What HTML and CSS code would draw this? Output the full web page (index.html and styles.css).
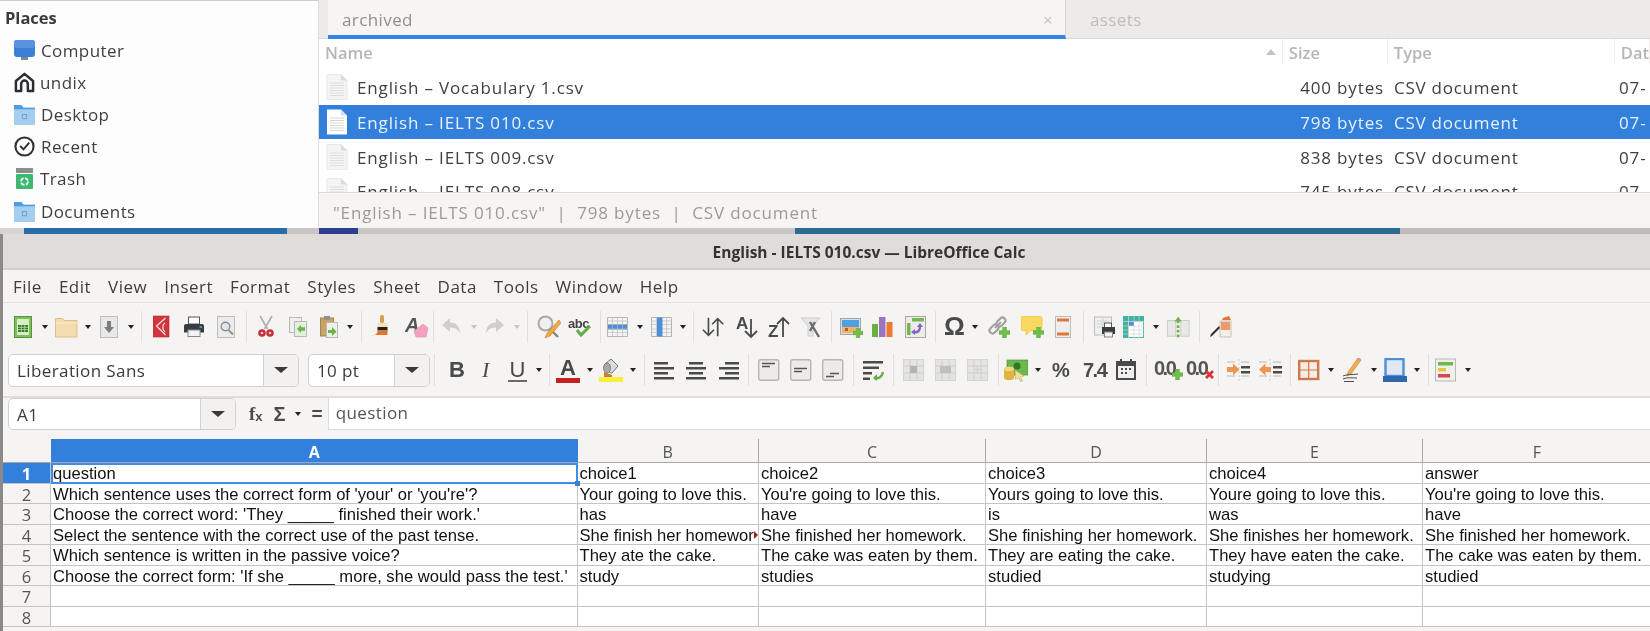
FILE: index.html
```html
<!DOCTYPE html>
<html lang="en">
<head>
    <meta charset="UTF-8">
    <title>English - IELTS 010.csv — LibreOffice Calc</title>
    <link rel="stylesheet" href="styles.css">
</head>
<body>
<svg class="defs" width="0" height="0">
    <symbol id="plus" viewBox="0 0 10 10"><path d="M3.3 0h3.4v3.3H10v3.4H6.7V10H3.3V6.7H0V3.3h3.3z" fill="#6fbf4a" stroke="#5aa838" stroke-width=".5"/></symbol>
    <symbol id="page" viewBox="0 0 22 26"><path d="M1 .5h14l6 6v19H1z" fill="#f4f4f4" stroke="#e9e9e9"/><path d="M15 .5v6h6z" fill="#dcdcdc"/><path d="M4 9h14M4 11.5h14M4 14h14M4 16.5h14M4 19h14M4 21.5h14" stroke="#dedede"/></symbol>
    <symbol id="folder" viewBox="0 0 20 20"><path d="M0 1.5h7l2 2h11V20H0z" fill="#a5cdf0"/><path d="M0 1h7l2 2.5h11V5H0z" fill="#4d9de0"/><rect x="8" y="10" width="4" height="4" fill="none" stroke="#6ba6d8"/></symbol>
</svg>

<div class="desktop">
    <section class="files">
        <aside class="places">
            <h3>Places</h3>
            <div class="place">
                <svg class="pl-icon" viewBox="0 0 21 21"><rect x="0" y="0" width="21" height="17" rx="3" fill="#3b7fd6"/><rect x="0" y="0" width="21" height="8" rx="3" fill="#5794e0"/><rect x="7" y="17" width="7" height="3" fill="#7b8896"/></svg>
                <span>Computer</span>
            </div>
            <div class="place place-tight">
                <svg class="pl-icon" viewBox="0 0 21 22"><path d="M10.5 2 19.5 9.5V20H14V12.5a3.5 3.5 0 0 0-7 0V20H1.5V9.5z" fill="none" stroke="#2b2e31" stroke-width="2.6" stroke-linejoin="round"/></svg>
                <span>undix</span>
            </div>
            <div class="place">
                <svg class="pl-icon" viewBox="0 0 21 21"><use href="#folder"/></svg>
                <span>Desktop</span>
            </div>
            <div class="place">
                <svg class="pl-icon" viewBox="0 0 22 22"><circle cx="11" cy="11" r="9.5" fill="none" stroke="#2f3234" stroke-width="2.2"/><path d="M6.5 10.5 10 14l6-7" fill="none" stroke="#2f3234" stroke-width="2"/></svg>
                <span>Recent</span>
            </div>
            <div class="place place-tight">
                <svg class="pl-icon" viewBox="0 0 21 21"><rect x="2" y="0" width="17" height="5" fill="#8b8f8c"/><rect x="2" y="6" width="17" height="15" rx="1" fill="#3dba6f"/><circle cx="10.5" cy="13.5" r="3.5" fill="none" stroke="#fff" stroke-width="1.8" stroke-dasharray="4 1.5"/></svg>
                <span>Trash</span>
            </div>
            <div class="place">
                <svg class="pl-icon" viewBox="0 0 21 21"><use href="#folder"/></svg>
                <span>Documents</span>
            </div>
        </aside>
        <div class="browser">
            <div class="tabs">
                <div class="tab tab-active"><span>archived</span><span class="tab-x">×</span></div>
                <div class="tab">assets</div>
            </div>
            <div class="file-head">
                <div class="col-name">Name<span class="sort-up"></span></div>
                <div class="col-size">Size</div>
                <div class="col-type">Type</div>
                <div class="col-date">Dat</div>
            </div>
            <div class="file-list">
                <div class="file-row">
                    <svg class="file-icon"><use href="#page"/></svg>
                    <div class="file-name">English – Vocabulary 1.csv</div>
                    <div class="file-size">400 bytes</div>
                    <div class="file-type">CSV document</div>
                    <div class="file-date">07-</div>
                </div>
                <div class="file-row selected">
                    <svg class="file-icon" viewBox="0 0 22 26"><path d="M1 .5h14l6 6v19H1z" fill="#fff"/><path d="M15 .5v6h6z" fill="#cfdff5"/><path d="M4 9h14M4 11.5h14M4 14h14M4 16.5h14M4 19h14M4 21.5h14" stroke="#d5d5d5"/></svg>
                    <div class="file-name">English – IELTS 010.csv</div>
                    <div class="file-size">798 bytes</div>
                    <div class="file-type">CSV document</div>
                    <div class="file-date">07-</div>
                </div>
                <div class="file-row">
                    <svg class="file-icon"><use href="#page"/></svg>
                    <div class="file-name">English – IELTS 009.csv</div>
                    <div class="file-size">838 bytes</div>
                    <div class="file-type">CSV document</div>
                    <div class="file-date">07-</div>
                </div>
                <div class="file-row">
                    <svg class="file-icon"><use href="#page"/></svg>
                    <div class="file-name">English – IELTS 008.csv</div>
                    <div class="file-size">745 bytes</div>
                    <div class="file-type">CSV document</div>
                    <div class="file-date">07-</div>
                </div>
            </div>
            <div class="status">"English – IELTS 010.csv"&nbsp; | &nbsp;798 bytes&nbsp; | &nbsp;CSV document</div>
        </div>
    </section>

    <div class="strip">
        <div class="strip-a"></div>
        <div class="strip-b"></div>
        <div class="strip-c"></div>
        <div class="strip-d"></div>
        <div class="strip-c strip-e"></div>
        <div class="strip-f"></div>
    </div>

    <section class="calc">
        <div class="titlebar">English - IELTS 010.csv — LibreOffice Calc</div>
        <nav class="menubar">
            <span>File</span><span>Edit</span><span>View</span><span>Insert</span><span>Format</span><span>Styles</span><span>Sheet</span><span>Data</span><span>Tools</span><span>Window</span><span>Help</span>
        </nav>

        <div class="toolbar toolbar-std">
            <svg viewBox="0 0 24 24"><rect x=".5" y="1.5" width="17" height="21" fill="#83bd62" stroke="#4f9a32"/><rect x="3" y="4" width="12" height="16" fill="#d8edc8"/><path d="M4 10h10v7H4z" fill="#2f7d22"/><path d="M4 12.3h10M4 14.6h10M7.3 10v7M10.7 10v7" stroke="#cfe8bd" stroke-width=".7"/></svg>
            <i class="drop"></i>
            <svg viewBox="0 0 24 24"><path d="M.5 5V3.5h7l2 2H22V22H.5z" fill="#f5dcae" stroke="#dcc08c"/><path d="M.5 8H22" stroke="#fbeccd"/></svg>
            <i class="drop"></i>
            <svg viewBox="0 0 24 24"><rect x=".5" y="1.5" width="17" height="21" fill="#e8e8e8" stroke="#bcbcbc"/><path d="M7 6h4v6h3l-5 6-5-6h3z" fill="#7c7c7c"/></svg>
            <i class="drop"></i>
            <i class="sep"></i>
            <svg viewBox="0 0 24 24"><rect x="0" y="1" width="16" height="21" fill="#d3353d" stroke="#b92a31" stroke-width=".6"/><path d="M12.5 3 3.5 11l9 9M12 8c-3 2-3 6 0 9" fill="none" stroke="#fbe3e3" stroke-width="1.2"/></svg>
            <svg viewBox="0 0 24 24"><rect x="4.5" y="2" width="11" height="7" fill="#fff" stroke="#555"/><path d="M2 9h16a2 2 0 0 1 2 2v6.5H0V11a2 2 0 0 1 2-2z" fill="#383d42"/><rect x="15.5" y="11" width="2.5" height="2" fill="#2f9fb3"/><rect x="4" y="15" width="12" height="6.5" fill="#f3f3f3" stroke="#8a8a8a"/></svg>
            <svg viewBox="0 0 24 24"><rect x=".5" y="1.5" width="17" height="21" fill="#ececec" stroke="#bdbdbd"/><circle cx="8.5" cy="11.5" r="4.3" fill="#dfe7ee" stroke="#8c8c8c" stroke-width="1.4"/><path d="m11.5 15 4.5 4.5" stroke="#9a8f83" stroke-width="2"/></svg>
            <i class="sep"></i>
            <svg viewBox="0 0 24 24"><path d="M2 1 9.5 14M14 1 6.5 14" stroke="#b0b0b0" stroke-width="1.7"/><circle cx="4" cy="18" r="3.8" fill="#c62f38"/><circle cx="12" cy="18" r="3.8" fill="#c62f38"/><circle cx="4" cy="18" r="1.3" fill="#f0c9c9"/><circle cx="12" cy="18" r="1.3" fill="#f0c9c9"/></svg>
            <svg viewBox="0 0 24 24"><rect x=".5" y="2.5" width="12" height="15" fill="#f0f0f0" stroke="#b8b8b8"/><rect x="5.5" y="6.5" width="12" height="15" fill="#e4efe0" stroke="#b8b8b8"/><path d="M8 14l4-4v2.3h4v3.4h-4V18z" fill="#69b545"/></svg>
            <svg viewBox="0 0 24 24"><rect x=".5" y="3" width="13" height="18" fill="#c8a468" stroke="#a58447"/><rect x="4" y="1" width="6" height="4" fill="#8f8f8f"/><rect x="6.5" y="7.5" width="11" height="15" fill="#eef3ea" stroke="#b8b8b8"/><path d="M8 15h4v-3l4.5 4.5L12 21v-3H8z" fill="#69b545"/></svg>
            <i class="drop"></i>
            <i class="sep"></i>
            <svg viewBox="0 0 24 24"><rect x="9" y="0" width="4" height="8" rx="1.5" fill="#d9a055"/><rect x="6.5" y="8" width="10" height="4" fill="#efe0c0"/><rect x="6.5" y="12" width="10" height="3.5" fill="#222"/><path d="M6.5 15.5h10V20H2c-1 1-1.5 1-2 1 3-1 6.5-1 6.5-5.5z" fill="#e2762d"/></svg>
            <svg viewBox="0 0 24 24"><text x="0" y="17" class="ic-a">A</text><path d="M9 16 18 9l5 4-2 9H11z" fill="#f3a0c0" stroke="#e889ad" stroke-width=".6"/></svg>
            <i class="sep"></i>
            <svg viewBox="0 0 24 24"><path d="M0 10 8 3v4.5c6 0 10 3.5 10 11-2-4-5-6-10-6V17z" fill="#cfcfcd"/></svg>
            <i class="drop drop-off"></i>
            <svg viewBox="0 0 24 24"><path d="M18 10 10 3v4.5C4 7.5 0 11 0 18.5c2-4 5-6 10-6V17z" fill="#cfcfcd"/></svg>
            <i class="drop drop-off"></i>
            <i class="sep"></i>
            <svg viewBox="0 0 24 24"><circle cx="8.5" cy="8.5" r="7" fill="#eef0f2" stroke="#a8a8a8" stroke-width="2"/><path d="M13 14l8 8" stroke="#8b8276" stroke-width="2.4"/><path d="M22 5 10 18l-2 5 5-2L24 8z" fill="#f0a93e" stroke="#b0772a" stroke-width=".5"/></svg>
            <svg class="wide" viewBox="0 0 26 24"><text x="0" y="13" class="ic-abc">abc</text><path d="M9 15l4 5 9-9" fill="none" stroke="#5cae45" stroke-width="3"/></svg>
            <i class="sep"></i>
            <svg viewBox="0 0 24 24"><path d="M.5 2.5h20v19H.5z" fill="#f4f4f4" stroke="#b5b5b5"/><rect x="1" y="9" width="19" height="5.5" fill="#4d8ed8"/><path d="M5.5 2.5v19M10.5 2.5v19M15.5 2.5v19M.5 6h20M.5 9.5h20M.5 14h20M.5 17.5h20" stroke="#bdbdbd" stroke-width=".7"/></svg>
            <i class="drop"></i>
            <svg viewBox="0 0 24 24"><path d="M.5 2.5h20v19H.5z" fill="#f4f4f4" stroke="#b5b5b5"/><path d="M5.5 2.5v19M10.5 2.5v19M15.5 2.5v19M.5 6h20M.5 9.5h20M.5 14h20M.5 17.5h20" stroke="#bdbdbd" stroke-width=".7"/><rect x="6" y="2.5" width="5.5" height="19" fill="#4d8ed8"/></svg>
            <i class="drop"></i>
            <i class="sep"></i>
            <svg viewBox="0 0 26 24"><path d="M7 2v19M1 15l6 6 6-6M17 22V3M11 9l6-6 6 6" fill="none" stroke="#4a4a4a" stroke-width="1.8"/></svg>
            <svg viewBox="0 0 24 24"><text x="0" y="14" class="ic-sort">A</text><path d="M15 4v18M9 16l6 6 6-6" fill="none" stroke="#4a4a4a" stroke-width="1.8"/></svg>
            <svg viewBox="0 0 24 24"><text x="0" y="22" class="ic-sort">Z</text><path d="M15 22V3M9 9l6-6 6 6" fill="none" stroke="#4a4a4a" stroke-width="1.8"/></svg>
            <svg viewBox="0 0 24 24"><path d="M0 3h19l-7 8v10H7V11z" fill="#e4e4e4" stroke="#cfcfcf"/><path d="M9 7l9 15M14 7 9 16" stroke="#6d6d6d" stroke-width="2.4"/></svg>
            <i class="sep"></i>
            <svg viewBox="0 0 24 24"><rect x=".5" y="3.5" width="20" height="16" fill="#cde2f2" stroke="#9fa5a8"/><rect x="2" y="5" width="17" height="7" fill="#4d9fe0"/><path d="M2 12h17v6H2z" fill="#f3b25d"/><rect x="5" y="13" width="3" height="3" fill="#c5552b"/><use href="#plus" x="13" y="13" width="10" height="10"/></svg>
            <svg viewBox="0 0 24 24"><rect x="0" y="9" width="6" height="13" fill="#67b13e"/><rect x="7" y="2" width="6.5" height="20" fill="#9c74c2"/><rect x="14.5" y="7" width="6" height="15" fill="#e87b2f"/></svg>
            <svg viewBox="0 0 24 24"><rect x=".5" y="1.5" width="20" height="21" fill="#ecece8" stroke="#a4a89e"/><rect x="7" y="3" width="12" height="3.5" fill="#73b753"/><rect x="2" y="8" width="3.5" height="12" fill="#73b753"/><path d="M8 17c5 1 7-1 7-6" fill="none" stroke="#8a62c7" stroke-width="2.4"/><path d="M12 12l3-4 3 4zM10 14v6l-4-3z" fill="#8a62c7"/></svg>
            <i class="sep"></i>
            <svg viewBox="0 0 24 24"><text x="0" y="20" class="ic-omega">Ω</text></svg>
            <i class="drop"></i>
            <svg viewBox="0 0 24 24"><g fill="none" stroke="#a2a2a2" stroke-width="2.2"><rect x="10" y="2" width="6" height="10" rx="3" transform="rotate(45 13 7)"/><rect x="3" y="9" width="6" height="10" rx="3" transform="rotate(45 6 14)"/></g><path d="M7 13l6-6" stroke="#a2a2a2" stroke-width="2"/><use href="#plus" x="11" y="12" width="11" height="11"/></svg>
            <svg viewBox="0 0 24 24"><path d="M1.5 1.5h18a1.500 1.500 0 0 1 1.500 1.500v11a1.500 1.500 0 0 1-1.500 1.500H10L5 20v-4.500H1.500A1.500 1.500 0 0 1 0 14V3a1.500 1.500 0 0 1 1.500-1.500z" fill="#fbd95f" stroke="#e8c04a" stroke-width=".7"/><use href="#plus" x="12" y="12" width="11" height="11"/></svg>
            <svg viewBox="0 0 24 24"><rect x=".5" y="1.5" width="15" height="21" fill="#eeeeee" stroke="#bcbcbc"/><rect x="2" y="3.5" width="12" height="3" fill="#e0763a"/><rect x="2" y="17.5" width="12" height="3" fill="#e0763a"/></svg>
            <i class="sep"></i>
            <svg viewBox="0 0 24 24"><rect x=".5" y="2" width="17" height="18" fill="#efefef" stroke="#bcbcbc"/><path d="M3 6h12M3 9h12M3 12h12M9 3v16" stroke="#d0d0d0"/><rect x="10.5" y="8" width="7" height="5" fill="#fff" stroke="#555"/><path d="M8 12h13v7H8z" fill="#383d42"/><rect x="10.5" y="17" width="8" height="5" fill="#f3f3f3" stroke="#888"/></svg>
            <svg viewBox="0 0 24 24"><rect x=".5" y="1.5" width="20" height="21" fill="#fff" stroke="#4fb7a7"/><rect x="0" y="1" width="21" height="5.5" fill="#3fb3a2"/><rect x="0" y="1" width="5.5" height="22" fill="#3fb3a2"/><rect x="6" y="6.5" width="5" height="4.5" fill="#4d8ed8"/><path d="M5.5 1v22M11 1v22M16 1v22M0 6.500h21M0 11h21M0 15h21M0 19h21" stroke="#cfd9d6" stroke-width=".7"/></svg>
            <i class="drop"></i>
            <svg viewBox="0 0 26 24"><rect x=".5" y="5" width="9" height="17" fill="#e8e8e6" stroke="#c9c9c9"/><rect x="15" y="5" width="9" height="17" fill="#e8e8e6" stroke="#c9c9c9"/><path d="M12 5v18" stroke="#70b549" stroke-width="3" stroke-dasharray="3 2"/><path d="M8 6l4.2-5L16 6z" fill="#70b549"/></svg>
            <i class="sep"></i>
            <svg viewBox="-2 0 24 24"><path d="M10 6h11v16H10z" fill="#f2efea" stroke="#c5c0b8"/><path d="M11 7h9v8H11z" fill="#ef9a66"/><path d="M13 3l6-2 2 4H12z" fill="#e0763a"/><path d="M10 13 2 21l-2 1 1-3 8-8z" fill="#333"/></svg>
        </div>

        <div class="toolbar toolbar-fmt">
            <div class="combo combo-font"><div class="combo-val">Liberation Sans</div><div class="combo-btn"><i class="drop drop-big"></i></div></div>
            <div class="combo combo-pt"><div class="combo-val">10 pt</div><div class="combo-btn"><i class="drop drop-big"></i></div></div>
            <i class="sep"></i>
            <span class="fmt fmt-b">B</span>
            <span class="fmt fmt-i">I</span>
            <span class="fmt fmt-u">U</span>
            <i class="drop"></i>
            <i class="sep"></i>
            <div class="fmt-color"><span>A</span><i class="bar-red"></i></div>
            <i class="drop"></i>
            <svg viewBox="0 0 24 24"><rect x="0" y="19" width="24" height="5" fill="#fbef3c"/><path d="M6 6l6-5 7 7-6 7c-4 0-7-5-7-9z" fill="#dcdcdc" stroke="#777"/><ellipse cx="8" cy="10" rx="3.5" ry="5" fill="#a8a8a8" stroke="#666" stroke-width=".7"/><path d="M5 14v5h8v-2z" fill="#c7803b"/></svg>
            <i class="drop"></i>
            <i class="sep"></i>
            <svg viewBox="0 0 24 24"><path d="M0 4h14v2.6H0zM0 9h20v2.6H0zM0 14h14v2.6H0zM0 19h20v2.6H0z" fill="#4a4a4a"/></svg>
            <svg viewBox="0 0 24 24"><path d="M3 4h14v2.6H3zM0 9h20v2.6H0zM3 14h14v2.6H3zM0 19h20v2.6H0z" fill="#4a4a4a"/></svg>
            <svg viewBox="0 0 24 24"><path d="M6 4h14v2.6H6zM0 9h20v2.6H0zM6 14h14v2.6H6zM0 19h20v2.6H0z" fill="#4a4a4a"/></svg>
            <i class="sep"></i>
            <svg viewBox="0 0 24 24"><rect x=".7" y="1.7" width="20" height="20.6" rx="2" fill="#ecebe9" stroke="#b5b5b5" stroke-width="1.4"/><path d="M4 5.5h13M4 8.5h8" stroke="#555" stroke-width="1.5"/></svg>
            <svg viewBox="0 0 24 24"><rect x=".7" y="1.7" width="20" height="20.6" rx="2" fill="#ecebe9" stroke="#b5b5b5" stroke-width="1.4"/><path d="M4 10.5h13M4 13.5h8" stroke="#555" stroke-width="1.5"/></svg>
            <svg viewBox="0 0 24 24"><rect x=".7" y="1.7" width="20" height="20.6" rx="2" fill="#ecebe9" stroke="#b5b5b5" stroke-width="1.4"/><path d="M8 15.5h9M4 18.5h8" stroke="#555" stroke-width="1.5"/></svg>
            <i class="sep"></i>
            <svg viewBox="0 0 24 24"><path d="M0 3h20v2.6H0zM0 8.5h16v2.6H0zM0 14h9v2.6H0zM0 19.5h7v2.6H0z" fill="#4a4a4a"/><path d="M11 20c5 1 8-1 9-6" fill="none" stroke="#65ad44" stroke-width="2.4"/><path d="M10 20l4-4v7z" fill="#65ad44"/></svg>
            <i class="sep"></i>
            <svg viewBox="0 0 24 24"><rect x=".5" y="1.5" width="20" height="21" fill="#e4e4e2" stroke="#d4d4d2"/><path d="M7 1.5v21M14 1.5v21M.5 8h20M.5 15h20" stroke="#cecece"/><rect x="7" y="8" width="7" height="7" fill="#b4b4b2"/></svg>
            <svg viewBox="0 0 24 24"><rect x=".5" y="1.5" width="20" height="21" fill="#e4e4e2" stroke="#d4d4d2"/><path d="M7 1.5v21M14 1.5v21M.5 8h20M.5 15h20" stroke="#cecece"/><rect x="5" y="8" width="11" height="7" fill="#c0c0be"/></svg>
            <svg viewBox="0 0 24 24"><rect x=".5" y="1.5" width="20" height="21" fill="#e4e4e2" stroke="#d4d4d2"/><path d="M7 1.5v21M14 1.5v21M.5 8h20M.5 15h20M10.5 8v7M7 11.5h7" stroke="#cecece"/></svg>
            <i class="sep"></i>
            <svg viewBox="0 0 24 24"><rect x="3" y="2" width="21" height="15" fill="#6ab84e" stroke="#3a8a28" stroke-width=".6"/><circle cx="13" cy="8" r="3.5" fill="#2c7a22"/><path d="M0 11c0-3 10-3 10 0v9c0 3-10 3-10 0z" fill="#e3b33f"/><ellipse cx="5" cy="11" rx="5" ry="2.2" fill="#f2d878"/><path d="M11 12l9 6-3.500 1 2 4-2 .5-2-4-3 2z" fill="#f4dc9a" stroke="#b99a55" stroke-width=".5"/></svg>
            <i class="drop"></i>
            <span class="fmt fmt-n">%</span>
            <span class="fmt fmt-n fmt-num">7.4</span>
            <svg viewBox="0 0 24 24"><rect x="0" y="3" width="20" height="19" fill="#4a4a4a"/><rect x="2" y="8" width="16" height="12" fill="#f0f0f0"/><path d="M5 10h2v2H5zM9 10h2v2H9zM13 10h2v2h-2zM5 14h2v2H5zM9 14h2v2H9z" fill="#4a4a4a"/><path d="M4 3h2V1H4zM14 3h2V1h-2z" fill="#4a4a4a"/></svg>
            <i class="sep"></i>
            <div class="dec"><span>0.0</span><svg viewBox="0 0 11 11"><use href="#plus"/></svg></div>
            <div class="dec"><span>0.0</span><svg viewBox="0 0 11 11"><path d="M1 3l2-2 2.5 2.5L8 1l2 2-2.5 2.5L10 8l-2 2-2.5-2.5L3 10 1 8l2.5-2.5z" fill="#d8353d"/></svg></div>
            <i class="sep"></i>
            <svg viewBox="0 0 24 24"><path d="M12 1v22" stroke="#c9c9c9" stroke-dasharray="2 2"/><path d="M14 4h8M14 18h8M0 4h8M0 18h8" stroke="#b8b8b8"/><path d="M14 8h9v2.5h-9zM14 13h9v2.5h-9z" fill="#4a4a4a"/><path d="M0 9h6V5.5l6.5 6-6.500 6V14H0z" fill="#ee9651"/></svg>
            <svg viewBox="0 0 24 24"><path d="M11 1v22" stroke="#c9c9c9" stroke-dasharray="2 2"/><path d="M14 4h8M14 18h8M0 4h8M0 18h8" stroke="#b8b8b8"/><path d="M14 8h9v2.5h-9zM14 13h9v2.5h-9z" fill="#4a4a4a"/><path d="M12 9H6.5V5.5L0 11.5l6.5 6V14H12z" fill="#ee9651"/></svg>
            <i class="sep"></i>
            <svg viewBox="0 0 24 24"><rect x="1.2" y="3" width="19" height="18" fill="#f6ece4" stroke="#cc7a4c" stroke-width="2.4"/><path d="M10.7 3v18M1 12h19" stroke="#cc7a4c" stroke-width="1.2"/></svg>
            <i class="drop"></i>
            <svg viewBox="0 0 24 24"><path d="M15 0l3 2-10 14-4 2 1-4z" fill="#f1b04a" stroke="#b8812a" stroke-width=".6"/><path d="M14 1l3 2 1-2-2-1z" fill="#e78aa0"/><path d="M0 18c4-2 9-1 15-2M0 21c4-2 9-1 14-1M1 23.5h10" fill="none" stroke="#4a4a4a"/></svg>
            <i class="drop"></i>
            <svg viewBox="0 0 24 24"><rect x="2.5" y="1" width="18" height="17" fill="#dfe9f5" stroke="#4d8ed8" stroke-width="2.4"/><rect x="0" y="18" width="24" height="6" fill="#2f67ad"/></svg>
            <i class="drop"></i>
            <i class="sep"></i>
            <svg viewBox="0 0 24 24"><rect x=".5" y="1" width="20" height="22" fill="#efefec" stroke="#b8b8b5"/><rect x="3" y="4" width="15" height="3.5" fill="#6fb84c"/><rect x="3" y="10" width="8" height="3.5" fill="#ebc447"/><rect x="3" y="16" width="12" height="3.5" fill="#d8474b"/></svg>
            <i class="drop"></i>
        </div>

        <div class="formula">
            <div class="combo combo-name"><div class="combo-val">A1</div><div class="combo-btn"><i class="drop drop-big"></i></div></div>
            <span class="fx">f<sub>x</sub></span>
            <span class="sigma">Σ</span>
            <i class="drop"></i>
            <span class="equals">=</span>
            <div class="input">question</div>
        </div>

        <div class="sheet">
            <div class="corner"></div>
            <div class="colhead colhead-on">A</div>
            <div class="colhead">B</div>
            <div class="colhead">C</div>
            <div class="colhead">D</div>
            <div class="colhead">E</div>
            <div class="colhead">F</div>

            <div class="rowhead rowhead-on">1</div>
            <div class="cell cell-on">question</div>
            <div class="cell">choice1</div>
            <div class="cell">choice2</div>
            <div class="cell">choice3</div>
            <div class="cell">choice4</div>
            <div class="cell">answer</div>

            <div class="rowhead">2</div>
            <div class="cell">Which sentence uses the correct form of 'your' or 'you're'?</div>
            <div class="cell">Your going to love this.</div>
            <div class="cell">You're going to love this.</div>
            <div class="cell">Yours going to love this.</div>
            <div class="cell">Youre going to love this.</div>
            <div class="cell">You're going to love this.</div>

            <div class="rowhead">3</div>
            <div class="cell">Choose the correct word: 'They _____ finished their work.'</div>
            <div class="cell">has</div>
            <div class="cell">have</div>
            <div class="cell">is</div>
            <div class="cell">was</div>
            <div class="cell">have</div>

            <div class="rowhead">4</div>
            <div class="cell">Select the sentence with the correct use of the past tense.</div>
            <div class="cell cell-clip"><span>She finish her homework.</span></div>
            <div class="cell">She finished her homework.</div>
            <div class="cell">She finishing her homework.</div>
            <div class="cell">She finishes her homework.</div>
            <div class="cell">She finished her homework.</div>

            <div class="rowhead">5</div>
            <div class="cell">Which sentence is written in the passive voice?</div>
            <div class="cell">They ate the cake.</div>
            <div class="cell">The cake was eaten by them.</div>
            <div class="cell">They are eating the cake.</div>
            <div class="cell">They have eaten the cake.</div>
            <div class="cell">The cake was eaten by them.</div>

            <div class="rowhead">6</div>
            <div class="cell">Choose the correct form: 'If she _____ more, she would pass the test.'</div>
            <div class="cell">study</div>
            <div class="cell">studies</div>
            <div class="cell">studied</div>
            <div class="cell">studying</div>
            <div class="cell">studied</div>

            <div class="rowhead">7</div>
            <div class="cell"></div><div class="cell"></div><div class="cell"></div><div class="cell"></div><div class="cell"></div><div class="cell"></div>

            <div class="rowhead">8</div>
            <div class="cell"></div><div class="cell"></div><div class="cell"></div><div class="cell"></div><div class="cell"></div><div class="cell"></div>
        </div>
    </section>
</div>
</body>
</html>
```

FILE: styles.css
```css
html, body { margin: 0; height: 631px; overflow: hidden; background: #f5f4f3; }
body { font-family: "Open Sans", sans-serif; color: #3d3d3d; }
.defs { position: absolute; }
.desktop { width: 1650px; height: 631px; overflow: hidden; filter: blur(.35px); }

/* file manager */
.files { display: flex; height: 228px; background: #f6f5f4; }
.places { width: 318px; flex: none; background: #fdfdfd; border-top: 1px solid #cfcfcd; border-right: 1px solid #dfdedc; }
.places h3 { margin: 0; padding-left: 5px; height: 33px; line-height: 33px; font-size: 16.5px; font-weight: 700; color: #3a3a3a; }
.place { display: flex; align-items: center; height: 32.2px; padding-left: 14px; gap: 6px; font-size: 17px; color: #3f3f3f; letter-spacing: .4px; }
.place-tight { gap: 5px; }
.pl-icon { width: 21px; height: 21px; flex: none; }

.browser { flex: 1; min-width: 0; display: flex; flex-direction: column; }
.tabs { display: flex; flex: none; height: 39px; padding-left: 9px; background: #ecebe9; box-sizing: border-box; border-bottom: 1px solid #d8d7d5; font-size: 17px; letter-spacing: .4px; }
.tab { display: flex; align-items: center; justify-content: space-between; padding: 0 12px 0 14px; color: #bdbdbb; box-sizing: border-box; margin-bottom: -1px; height: 39px; }
.tab + .tab { padding-left: 24px; }
.tab-active { width: 738px; background: #f6f5f4; color: #8f8f8d; border-bottom: 4px solid #3584e4; border-right: 1px solid #d8d7d5; padding-top: 4px; }
.tab-x { color: #c2c2c0; font-size: 17px; }

.file-head { display: flex; flex: none; height: 25px; line-height: 27px; background: #fff; font-size: 16.5px; font-weight: 600; color: #b6b6b4; }
.file-head > div { box-sizing: border-box; border-right: 1px solid #f0efee; padding-left: 6px; }
.col-name { width: 964px; position: relative; }
.col-size { width: 105px; }
.col-type { width: 227px; }
.col-date { flex: 1; }
.sort-up { position: absolute; right: 6px; top: 10px; border: 5px solid transparent; border-top: 0; border-bottom: 6px solid #c4c4c2; }

.file-list { flex: none; height: 129px; overflow: hidden; background: #fefefe; padding-top: 6px; box-sizing: border-box; border-bottom: 1px solid #dbdad8; }
.file-row { display: flex; align-items: center; height: 34.7px; padding-top: 1px; box-sizing: border-box; font-size: 17px; color: #404040; letter-spacing: .85px; }
.file-row.selected { background: #3280dc; color: #e8f1fb; }
.file-icon { width: 22px; height: 26px; margin-left: 7px; margin-top: -1px; flex: none; }
.file-name { width: 840px; margin-left: 9px; flex: none; }
.file-size { width: 187px; text-align: right; flex: none; }
.file-type { margin-left: 10px; width: 225px; flex: none; letter-spacing: .75px; }
.status { flex: none; height: 35px; overflow: hidden; padding-left: 14px; line-height: 39px; font-size: 17px; color: #9a9a98; letter-spacing: .85px; }

/* bit of the window behind */
.strip { display: flex; height: 6px; background: #bdbcba; }
.strip-a { width: 24px; background: #d6d5d3; }
.strip-b { width: 263px; background: #2a6ca8; }
.strip-c { width: 32px; background: #c7c6c4; }
.strip-d { width: 39px; background: #2c3f8c; }
.strip-e { width: 437px; }
.strip-f { width: 605px; background: #2b6b94; }

/* calc window */
.calc { border-left: 3px solid #8b8a88; height: 397px; background: #f5f4f3; }
.titlebar { height: 34px; line-height: 36px; padding-left: 85px; text-align: center; background: #dfdcd9; border-bottom: 2px solid #d2cfcb; font-size: 15.5px; font-weight: 700; color: #333; }
.menubar { display: flex; gap: 17px; height: 33px; line-height: 33px; padding-left: 10px; font-size: 17px; color: #3d3d3d; box-sizing: border-box; border-bottom: 1px solid #e4e3e1; letter-spacing: .5px; }

.toolbar { display: grid; align-items: center; justify-items: start; padding-left: 11px; }
.toolbar svg { width: 24px; height: 24px; display: block; }
.toolbar-std { height: 44px; padding-top: 2px; grid-template-columns: 28px 13px 30px 15px 28px 13px 12px 31px 33px 29px 12px 31px 31px 27px 14px 10px 34px 28px 9px 29px 15px 28px 13px 10px 31px 32px 7px 30px 14px 29px 13px 9px 34px 32px 33px 30px 9px 32px 33px 30px 9px 28px 16px 33px 34px 28px 11px 29px 30px 14px 32px 9px 24px; }
.toolbar-fmt { height: 42px; padding: 0 0 5px 5px; grid-template-columns: 300px 126px 15px 33px 26px 28px 13px 7px 31px 12px 31px 14px 10px 32px 33px 29px 10px 32px 32px 31px 10px 30px 10px 32px 32px 31px 6px 31px 17px 31px 33px 30px 8px 32px 32px 9px 32px 31px 8px 30px 15px 28px 12px 31px 14px 7px 30px 10px; }
.toolbar .wide { width: 26px; }

.drop { display: block; width: 0; height: 0; border: 3.5px solid transparent; border-top: 4px solid #222; border-bottom: 0; }
.drop-off { border-top-color: #c5c5c3; }
.drop-big { border-width: 6px 7px 0; border-top-color: #3a3a3a; }
.sep { display: block; width: 1px; height: 32px; background: #e0dfdd; }

.combo { display: flex; height: 33px; box-sizing: border-box; border: 1px solid #d2d1cf; border-radius: 5px; background: #fff; overflow: hidden; font-size: 17px; color: #3a3a3a; letter-spacing: .4px; }
.combo-val { flex: 1; line-height: 31px; padding-left: 8px; }
.combo-btn { width: 34px; display: flex; align-items: center; justify-content: center; border-left: 1px solid #d2d1cf; background: #f2f1f0; }
.combo-font { width: 291px; }
.combo-pt { width: 122px; }
.combo-name { width: 228px; }

.fmt { font-family: "Liberation Sans", sans-serif; font-weight: 700; color: #4a4a4a; line-height: 24px; }
.fmt-b { font-size: 22px; }
.fmt-i { font-size: 22px; font-style: italic; font-weight: 400; font-family: "Liberation Serif", serif; }
.fmt-u { font-size: 22px; font-weight: 400; border-bottom: 2px solid #6a6a6a; line-height: 21px; width: 19px; text-align: center; }
.fmt-n { font-size: 20px; }
.fmt-num { letter-spacing: -1.5px; }
.fmt-color { display: flex; flex-direction: column; align-items: center; width: 24px; font-family: "Liberation Sans", sans-serif; font-weight: 700; font-size: 22px; line-height: 20px; color: #484848; }
.bar-red { display: block; width: 24px; height: 5px; background: #c4201f; }
.dec { display: flex; align-items: flex-end; font-family: "Liberation Sans", sans-serif; font-weight: 700; font-size: 20px; letter-spacing: -2.5px; line-height: 24px; color: #555; }
.dec span { margin-top: -4px; }
.toolbar .dec svg { width: 11px; height: 11px; margin-left: -2px; }

.ic-a { font: italic 700 20px "Liberation Sans", sans-serif; fill: #555; }
.ic-abc { font: 700 13px "Liberation Sans", sans-serif; fill: #444; letter-spacing: -.5px; }
.ic-sort { font: 700 17px "Liberation Sans", sans-serif; fill: #4a4a4a; }
.ic-omega { font: 700 26px "Liberation Sans", sans-serif; fill: #4a4a4a; }

.formula { display: flex; align-items: flex-start; height: 34px; padding-left: 5px; border-top: 2px solid #dfdedc; box-sizing: border-box; }
.formula .combo { height: 32px; }
.fx { margin: 5px 0 0 13px; font: 700 19px "Liberation Serif", serif; color: #4a4a4a; }
.fx sub { font-size: 13px; font-family: "Liberation Sans", sans-serif; vertical-align: -1px; }
.sigma { margin: 5px 0 0 11px; font: 700 20px "Liberation Sans", sans-serif; color: #4a4a4a; }
.formula > .drop { margin: 14px 0 0 9px; }
.equals { margin: 5px 0 0 11px; font: 700 19px "Liberation Sans", sans-serif; color: #4a4a4a; }
.input { flex: 1; margin-left: 5px; height: 32px; line-height: 30px; background: #fff; padding-left: 7px; font-size: 17px; color: #555; border-left: 1px solid #dcdbd9; border-bottom: 1px solid #dcdbd9; box-sizing: border-box; letter-spacing: .4px; }

/* sheet */
.sheet { display: grid; margin-top: 9px; grid-template-columns: 48px 526.5px 181.5px 227px 221px 216px 229px; grid-template-rows: 24px repeat(8, 20.5px); background: #fff; font-family: "Liberation Sans", sans-serif; font-size: 16.6px; color: #111; }
.corner, .colhead, .rowhead { background: #f5f4f3; box-sizing: border-box; font-family: "Open Sans", sans-serif; color: #555; text-align: center; }
.corner { border-bottom: 1px solid #a8a8a8; }
.colhead { border-right: 1px solid #a8a8a8; border-bottom: 1px solid #a8a8a8; line-height: 26px; font-size: 16px; }
.colhead-on { background: #3280dc; color: #fff; font-weight: 700; border-right: 0; }
.rowhead { border-right: 1px solid #c4c4c4; border-bottom: 1px solid #c4c4c4; line-height: 22px; font-size: 16.5px; }
.rowhead-on { background: #3280dc; color: #fff; font-weight: 700; }
.cell { box-sizing: border-box; border-right: 1px solid #c4c4c4; border-bottom: 1px solid #c4c4c4; padding-left: 2px; line-height: 21px; white-space: nowrap; overflow: hidden; }
.cell-on { outline: 2px solid #3f8ee4; outline-offset: -2px; position: relative; overflow: visible; }
.cell-on::after { content: ""; position: absolute; right: -3px; bottom: -3px; width: 5px; height: 5px; background: #3280dc; }
.cell-clip { position: relative; }
.cell-clip span { display: block; overflow: hidden; margin-right: 4px; }
.cell-clip::after { content: ""; position: absolute; right: 0; top: 6px; border: 4px solid transparent; border-right: 0; border-left: 4px solid #a02020; }
```
